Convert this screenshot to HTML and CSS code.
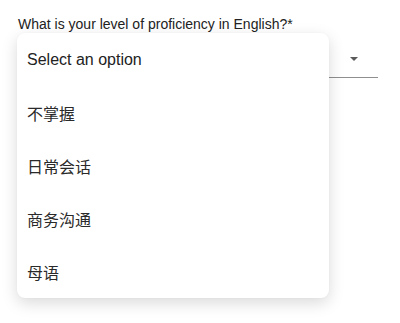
FILE: index.html
```html
<!DOCTYPE html>
<html>
<head>
<meta charset="utf-8">
<link rel="stylesheet" href="styles.css">
</head>
<body>
<div class="field">
  <div class="label">What is your level of proficiency in English?*</div>
  <div class="select">
    <span class="arrow"></span>
  </div>
  <ul class="menu">
    <li class="item">Select an option</li>
    <li class="item">不掌握</li>
    <li class="item">日常会话</li>
    <li class="item">商务沟通</li>
    <li class="item">母语</li>
  </ul>
</div>
</body>
</html>
```
FILE: styles.css
```css
html, body {
  margin: 0;
  padding: 0;
  background: #ffffff;
}
body {
  min-height: 323px;
  font-family: "Liberation Sans", Arial, "Noto Sans CJK SC", sans-serif;
  color: #222222;
}
.field {
  position: relative;
  width: 360px;
  min-height: 300px;
  padding: 16px 0 0 18px;
}
.label {
  font-size: 14px;
  line-height: 17px;
  color: #222222;
}
.select {
  box-sizing: border-box;
  height: 45px;
  padding: 24px 20px 0 0;
  border-bottom: 1px solid #8f8f8f;
  display: flex;
  align-items: flex-start;
  justify-content: flex-end;
}
.arrow {
  width: 0;
  height: 0;
  border-left: 4px solid transparent;
  border-right: 4px solid transparent;
  border-top: 4px solid #5a5a5a;
}
.menu {
  position: absolute;
  left: 17px;
  top: 33px;
  width: 312px;
  margin: 0;
  padding: 0;
  list-style: none;
  background: #ffffff;
  border-radius: 8px;
  box-shadow: 0 5px 16px rgba(0, 0, 0, 0.15), 0 0 2px rgba(0, 0, 0, 0.04);
}
.item {
  height: 53px;
  display: flex;
  align-items: center;
  padding-left: 10px;
  font-size: 16px;
  color: #222222;
}
.item:not(:first-child) {
  color: #2a2a2a;
}
```
